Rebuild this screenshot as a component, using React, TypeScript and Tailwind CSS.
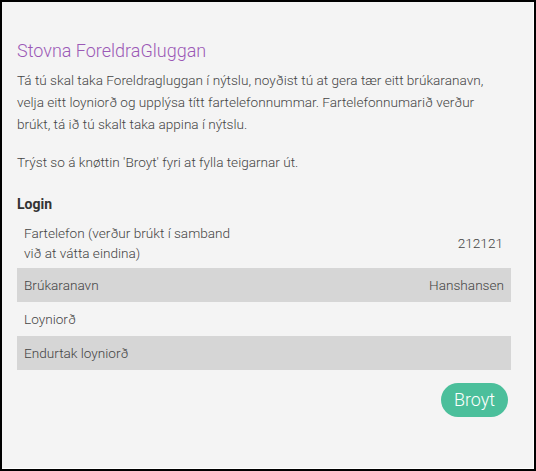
import React from "react";

export default function App() {
  return (
    <div
      className="w-[536px] h-[471px] bg-[#f4f4f4] border-2 border-black relative overflow-hidden"
      style={{ fontFamily: "Roboto, 'Liberation Sans', sans-serif" }}
    >
      <div className="absolute inset-0 border-r border-b border-white pointer-events-none" />
      <div className="pl-[15px] pr-[23px] pt-[36px]">
        <h1 className="text-[18px] leading-[26px] font-light text-[#9b59b6]">Stovna ForeldraGluggan</h1>
        <div className="mt-[5px] text-[13.6px] leading-[22px] font-light text-[#444] w-[478px]">
          <p>
            Tá tú skal taka Foreldragluggan í nýtslu, noyðist tú at gera tær eitt brúkaranavn, velja eitt
            loyniorð og upplýsa títt fartelefonnummar. Fartelefonnumarið verður brúkt, tá ið tú skalt taka
            appina í nýtslu.
          </p>
          <p className="mt-[16px]">Trýst so á knøttin 'Broyt' fyri at fylla teigarnar út.</p>
        </div>
        <div className="mt-[21px] text-[14px] leading-[20px] font-bold text-[#333]">Login</div>
        <div className="mt-[4px] text-[13.6px] leading-[20px] font-light text-[#444]">
          <div className="flex items-center justify-between pl-[7px] pr-[8px] py-[5px]">
            <span className="w-[222px]">Fartelefon (verður brúkt í samband við at vátta eindina)</span>
            <span>212121</span>
          </div>
          <div className="flex items-center justify-between pl-[7px] pr-[7px] py-[7px] bg-[#d6d6d6]">
            <span>Brúkaranavn</span>
            <span>Hanshansen</span>
          </div>
          <div className="flex items-center justify-between pl-[7px] pr-[8px] py-[7px]">
            <span>Loyniorð</span>
          </div>
          <div className="flex items-center justify-between pl-[7px] pr-[8px] py-[7px] bg-[#d6d6d6]">
            <span>Endurtak loyniorð</span>
          </div>
        </div>
        <div className="flex justify-end mt-[13px] pr-[3px]">
          <button className="h-[34px] w-[67px] rounded-full bg-[#4bbf9b] text-white text-[18px] font-light leading-[34px]">
            Broyt
          </button>
        </div>
      </div>
    </div>
  );
}
